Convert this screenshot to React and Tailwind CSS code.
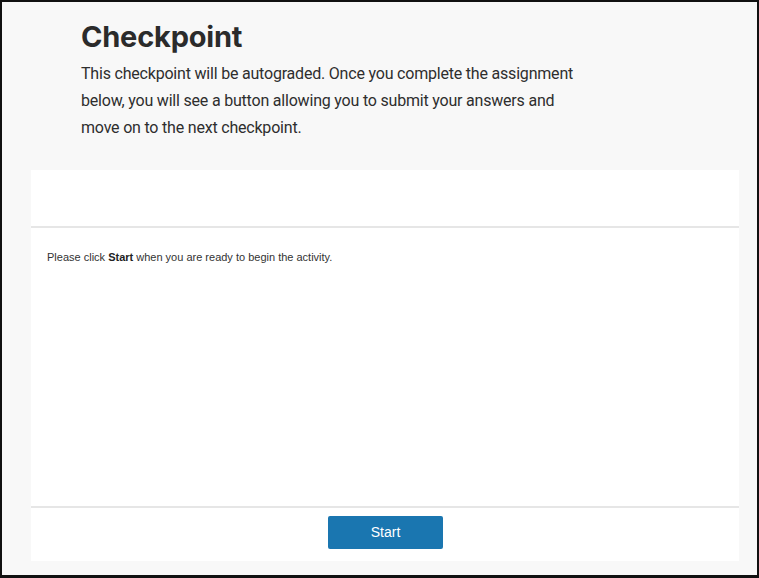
import React from 'react';

const App = () => {
  return (
    <div className="w-[759px] h-[578px] border-2 border-b-[3px] border-[#111] bg-[#f8f8f8] flex flex-col overflow-hidden" style={{ fontFamily: 'Inter, "Liberation Sans", sans-serif' }}>
      {/* Header */}
      <div className="pl-[79px] pt-[17px] h-[168px]">
        <h1 className="text-[29px] leading-[36px] font-bold text-[#2b2b2b] tracking-[-0.2px]">Checkpoint</h1>
        <p className="mt-[5px] w-[494px] text-[16px] leading-[27px] text-[#2e2e2e] tracking-[-0.2px]" style={{ fontFamily: 'Roboto, Inter, sans-serif' }}>
          This checkpoint will be autograded. Once you complete the assignment below, you will see a button allowing you to submit your answers and move on to the next checkpoint.
        </p>
      </div>

      {/* Activity panel */}
      <div className="ml-[29px] w-[708px] h-[391px] bg-white flex flex-col">
        <div className="h-[58px] border-b-2 border-[#e6e6e6]"></div>
        <div className="flex-1 pl-[16px] pt-[22px]" style={{ fontFamily: '"Liberation Sans", Arial, sans-serif' }}>
          <p className="text-[11px] leading-[14px] text-[#333]">
            Please click <strong className="font-bold text-[#222]">Start</strong> when you are ready to begin the activity.
          </p>
        </div>
        <div className="h-[55px] border-t-2 border-[#e6e6e6] flex justify-center pt-[8px]">
          <button className="w-[115px] h-[33px] bg-[#1a76b0] rounded-[2px] text-white text-[14px] ml-[1px]" style={{ fontFamily: '"Liberation Sans", Arial, sans-serif' }}>
            Start
          </button>
        </div>
      </div>
    </div>
  );
};

export default App;
